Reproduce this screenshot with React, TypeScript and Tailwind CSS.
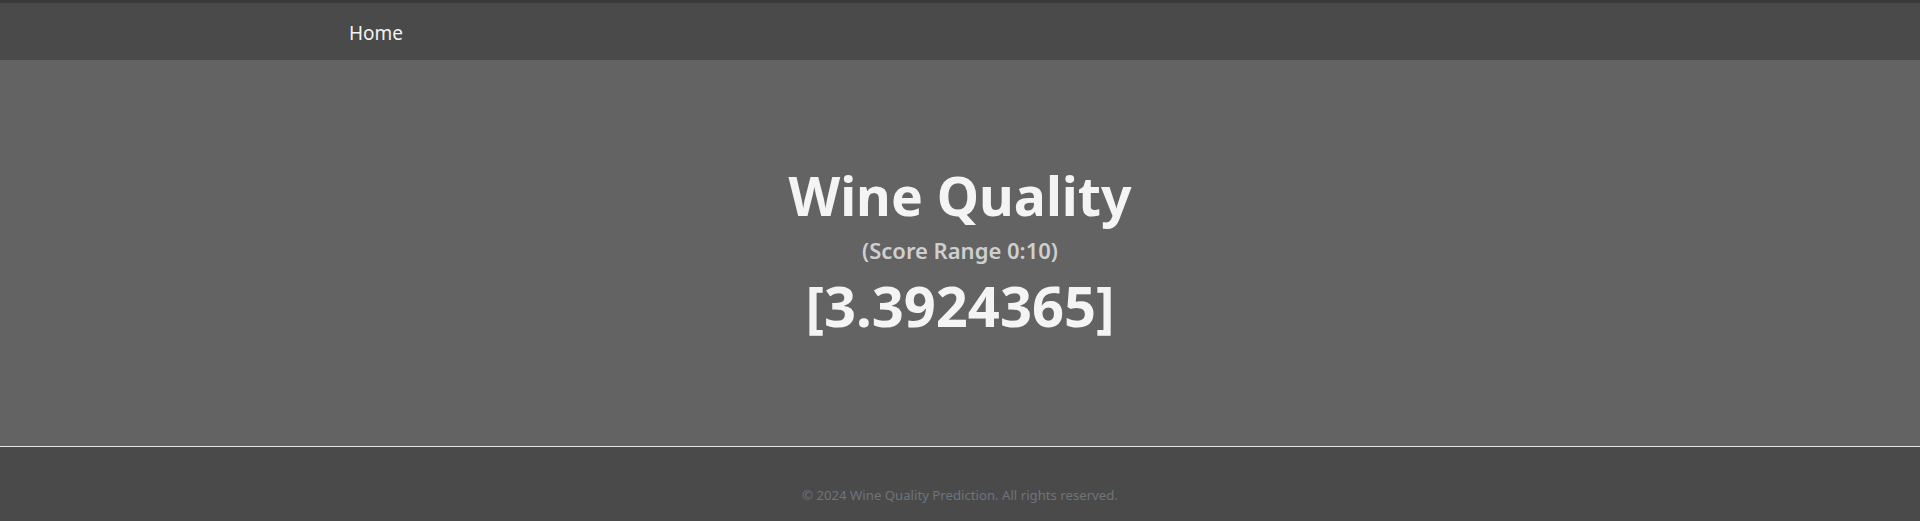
export default function App() {
  return (
    <div className="flex h-[521px] flex-col bg-[#636363] font-['Noto_Sans',sans-serif]">
      <div className="h-[3px] bg-[#3a3a3a]" />
      <nav className="h-[57px] bg-[#4a4a4a]">
        <div className="flex h-full items-center pl-[349px] pt-[3px]">
          <a className="text-[19px] leading-[28px] text-[#f2f2f2]">Home</a>
        </div>
      </nav>
      <main className="flex h-[386px] flex-col items-center justify-center text-center">
        <h1 className="text-[53.5px] font-bold leading-[60px] text-[#f4f4f4]">
          Wine Quality
        </h1>
        <h3 className="mt-[9px] text-[22px] font-semibold leading-[30px] text-[#cfcfcf]">
          (Score Range 0:10)
        </h3>
        <h2 className="mt-[5px] text-[56px] font-bold leading-[70px] text-[#f4f4f4]">
          [3.3924365]
        </h2>
      </main>
      <div className="h-px bg-[#e6e6e6]" />
      <footer className="flex flex-1 items-center justify-center bg-[#4a4a4a] pt-[23px]">
        <p className="text-[13.2px] text-[#6c757d]">
          © 2024 Wine Quality Prediction. All rights reserved.
        </p>
      </footer>
    </div>
  );
}
